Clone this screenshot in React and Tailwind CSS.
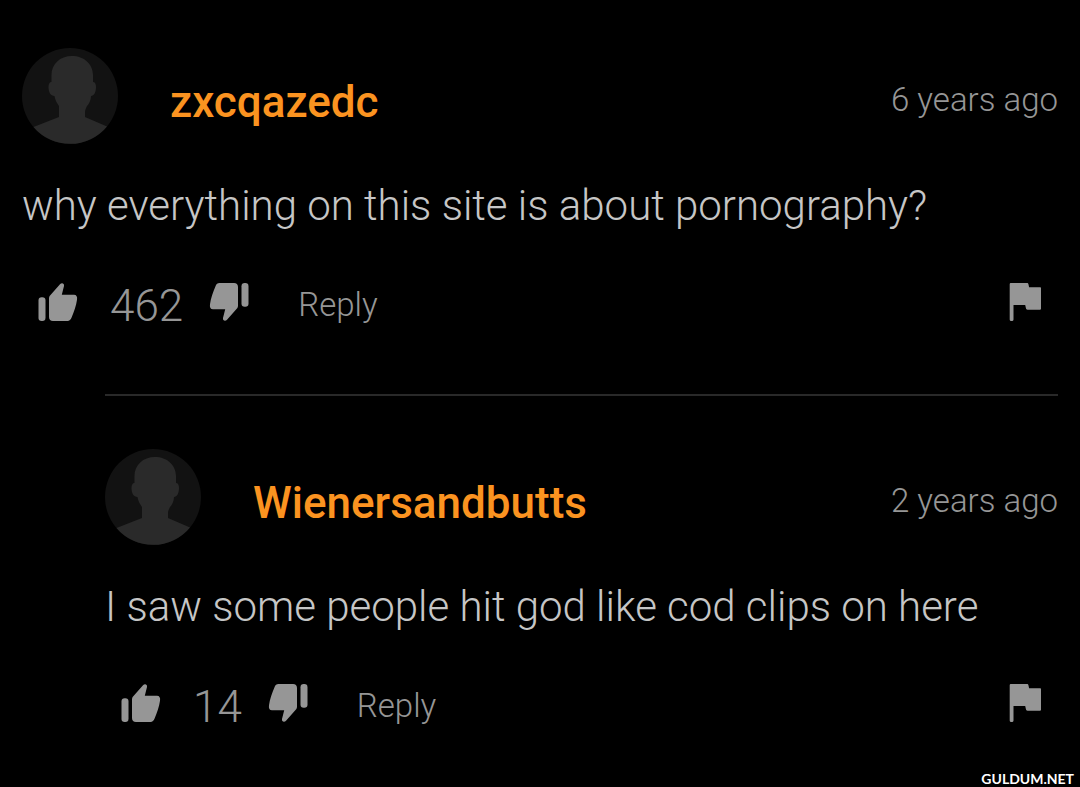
import React from 'react';

const comments = [
  {
    id: 1,
    user: 'zxcqazedc',
    age: '6 years ago',
    text: 'why everything on this site is about pornography?',
    votes: 462,
  },
  {
    id: 2,
    user: 'Wienersandbutts',
    age: '2 years ago',
    text: 'I saw some people hit god like cod clips on here',
    votes: 14,
  },
];

const Avatar = () => (
  <svg viewBox="0 0 96 96" className="w-24 h-24 shrink-0" aria-hidden="true">
    <circle cx="48" cy="48" r="48" fill="#121212" />
    <path
      fill="#2a2a2a"
      d="M50 8C62 8 71 16 71 27v7c2 0 3 2 3 5 0 5-2 9-5 9 0 4-2 8-4 10-1 2-2 4-2 6v5l22 9.500A48 48 0 0 1 11.500 79L37 69V58c-2-3-4-6-4.500-10-4 0-6-4-6-9 0-3 1-5 3-5v-7C29.500 16 38 8 50 8z"
    />
  </svg>
);

const Thumb = ({ className = '' }) => (
  <svg viewBox="0 0 40 40" className={`w-10 h-10 ${className}`} fill="currentColor" aria-hidden="true">
    <rect x="0.500" y="15.300" width="7" height="23.700" rx="3.200" />
    <path d="M11 16.500c0-1.500.5-2.500 1.500-3.500L22 2.200C23.500.6 26.500 1 26 4L23.800 12.800H36c2.500 0 3.500 2 3 5-.8 6-3 12-5.500 18-.8 2-2 3.200-4 3.200H15c-2.500 0-4-1.500-4-4z" />
  </svg>
);

const Flag = () => (
  <svg viewBox="0 0 34 40" className="w-[34px] h-10" fill="currentColor" aria-hidden="true">
    <path d="M3 1h16c1 0 1.300.5 1.500 1.500l.6 2.800H32c.8 0 1 .4 1 1.200v20c0 .8-.2 1.200-1 1.200H19.500c-1 0-1.300-.5-1.500-1.200L17.200 23H5.500v14.500c0 2-3.800 2-3.800 0v-35C1.700 1.500 2 1 3 1z" />
  </svg>
);

const Comment = ({ user, age, text, votes }) => (
  <article>
    <header className="flex items-center">
      <Avatar />
      <a href="#user" className="ml-[52px] mt-3 text-[44px] leading-[52px] font-medium text-[#fb9320]">
        {user}
      </a>
      <time className="ml-auto mt-2 text-[33px] leading-10 font-light text-[#969696]">{age}</time>
    </header>

    <p className="mt-9 text-[42px] leading-[52px] font-light text-[#c6c6c6]">{text}</p>

    <div className="mt-12 px-4 flex items-center text-[#969696]">
      <button type="button" aria-label="Like" className="pb-2">
        <Thumb />
      </button>
      <span className="ml-8 text-[44px] leading-[52px] font-light">{votes}</span>
      <button type="button" aria-label="Dislike" className="ml-[26px] pb-2">
        <Thumb className="rotate-180" />
      </button>
      <button type="button" className="ml-[49px] pb-0.5 text-[33px] leading-10 font-light">
        Reply
      </button>
      <button type="button" aria-label="Report" className="ml-auto pb-2">
        <Flag />
      </button>
    </div>
  </article>
);

const App = () => {
  const [parent, reply] = comments;

  return (
    <main className="relative min-h-screen bg-black px-[22px] pt-12 font-[Roboto,sans-serif]">
      <Comment {...parent} />
      <section className="ml-[83px] mt-[62px] pt-[53px] border-t-2 border-[#292929]">
        <Comment {...reply} />
      </section>
      <span className="absolute right-1.5 bottom-0 text-[14px] leading-4 font-bold text-white font-[Lato,sans-serif]">
        GULDUM.NET
      </span>
    </main>
  );
};

export default App;
